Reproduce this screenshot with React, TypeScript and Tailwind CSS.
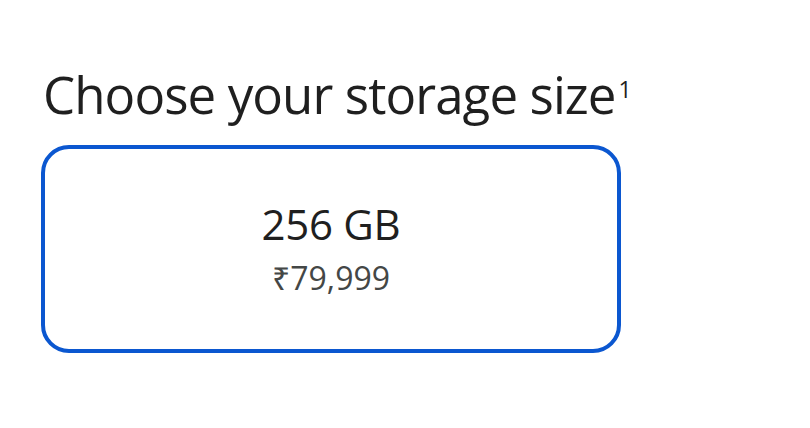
import React from 'react';

const App: React.FC = () => {
    return (
        <div className="w-[810px] h-[428px] bg-white text-[#1f1f1f] pl-[41px] pt-[62px]" style={{ fontFamily: '"Open Sans", "Noto Sans", sans-serif' }}>
            <h2 className="pl-[2px] text-[51px] leading-[64px] font-medium tracking-[-0.9px] flex items-start">
                Choose your storage size
                <sup className="text-[23px] leading-none ml-[3px] mt-[27px] align-top font-normal">1</sup>
            </h2>
            <div className="mt-[19px] w-[580px] h-[208px] border-4 border-[#0b57d0] rounded-[28px] flex flex-col items-center justify-center pb-[2px]">
                <p className="text-[42px] leading-[52px] font-medium tracking-[-0.3px]">256 GB</p>
                <p className="text-[32px] leading-[40px] text-[#444746] mt-[8px]">₹79,999</p>
            </div>
        </div>
    );
};

export default App;
